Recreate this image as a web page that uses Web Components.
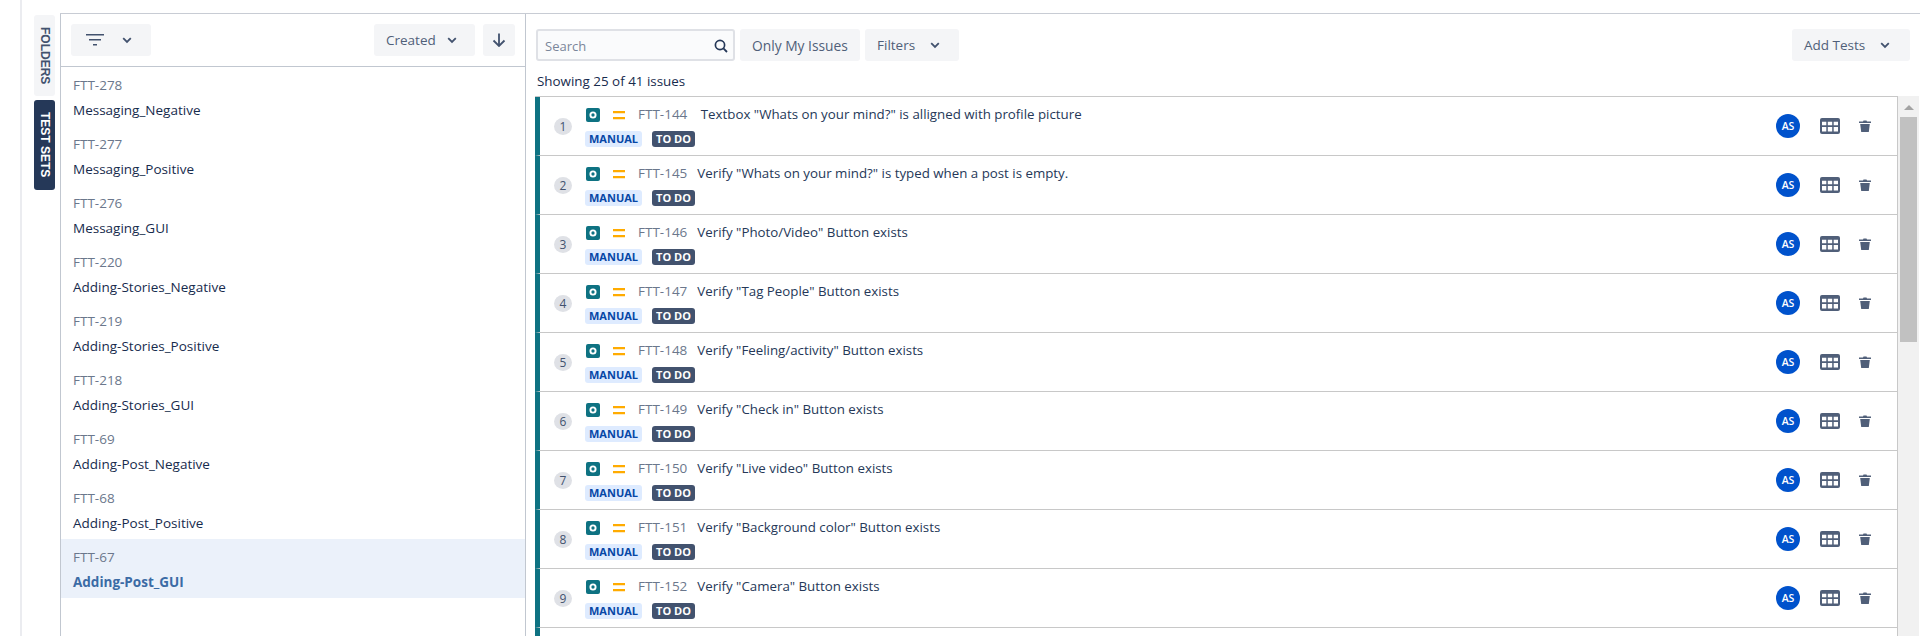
<!DOCTYPE html>
<html>
<head>
<meta charset="utf-8">
<title>Test Sets</title>
<style>
    html, body { margin: 0; height: 636px; overflow: hidden; background: #fff; }
    body { font-family: "Open Sans", "Noto Sans", sans-serif; color: #172b4d; }
</style>
</head>
<body>
<test-app></test-app>

<script>
const CHEVRON = `<svg width="10" height="10" viewBox="0 0 10 10"><path d="M1.2 3.2 5 7l3.8-3.8" fill="none" stroke="#42526e" stroke-width="1.8"/></svg>`;

class TestButton extends HTMLElement {
    constructor() {
        super();
        this.attachShadow({ mode: 'open' });
        this.shadowRoot.innerHTML = `
            <style>
                :host {
                    display: inline-flex;
                    align-items: center;
                    justify-content: flex-start;
                    gap: 15px;
                    height: 32px;
                    padding-left: 12px;
                    box-sizing: border-box;
                    background: #f4f5f7;
                    border-radius: 3px;
                    color: #505f79;
                    font-size: 13.5px;
                    flex: none;
                }
            </style>
            <slot></slot>
        `;
    }
}

class SideTabs extends HTMLElement {
    constructor() {
        super();
        this.attachShadow({ mode: 'open' });
        this.shadowRoot.innerHTML = `
            <style>
                :host {
                    display: flex;
                    flex-direction: column;
                    gap: 4px;
                    width: 21px;
                    padding-top: 1px;
                    flex: none;
                    font-family: "Liberation Sans", sans-serif;
                    font-size: 12px;
                    font-weight: bold;
                }
                div {
                    writing-mode: vertical-rl;
                    display: flex;
                    align-items: center;
                    justify-content: center;
                    border-radius: 3px;
                    box-sizing: border-box;
                }
                .off { height: 81px; background: #f4f5f7; color: #42526e; }
                .on { height: 90px; background: #253858; color: #fff; }
            </style>
            <div class="off">FOLDERS</div>
            <div class="on">TEST SETS</div>
        `;
    }
}

class SetItem extends HTMLElement {
    constructor() {
        super();
        this.attachShadow({ mode: 'open' });
        this.shadowRoot.innerHTML = `
            <style>
                :host {
                    display: block;
                    height: 59px;
                    box-sizing: border-box;
                    padding: 8px 12px 0;
                    font-size: 13.5px;
                }
                :host([selected]) { background: #ebf1fa; }
                .key { color: #6b778c; line-height: 20px; }
                .name { color: #172b4d; line-height: 20px; margin-top: 5px; }
                :host([selected]) .name { color: #3b6ba5; font-weight: 700; }
            </style>
            <div class="key">${this.getAttribute('key')}</div>
            <div class="name">${this.getAttribute('name')}</div>
        `;
    }
}

class SetPanel extends HTMLElement {
    constructor() {
        super();
        this.attachShadow({ mode: 'open' });
        this.shadowRoot.innerHTML = `
            <style>
                :host {
                    display: block;
                    width: 466px;
                    flex: none;
                    box-sizing: border-box;
                    border-left: 1px solid #c1c7d0;
                    border-right: 1px solid #c1c7d0;
                }
                .head {
                    display: flex;
                    align-items: center;
                    gap: 8px;
                    height: 52px;
                    padding: 0 10px;
                    border-bottom: 1px solid #c1c7d0;
                }
                .filter { width: 80px; margin-right: auto; padding-left: 15px; gap: 18px; }
                .created { width: 101px; gap: 11px; }
                .sort { width: 32px; padding-left: 9px; }
            </style>
            <div class="head">
                <test-button class="filter">
                    <svg width="18" height="14" viewBox="0 0 18 14"><path d="M0 1h18v1.5H0zM3 6h12v1.5H3zM7 11h4v1.5H7z" fill="#42526e"/></svg>
                    ${CHEVRON}
                </test-button>
                <test-button class="created">Created ${CHEVRON}</test-button>
                <test-button class="sort">
                    <svg width="14" height="14" viewBox="0 0 14 14"><path d="M7 .5V13M1.5 7.5 7 13l5.5-5.5" fill="none" stroke="#42526e" stroke-width="1.8"/></svg>
                </test-button>
            </div>
            <slot></slot>
        `;
    }
}

class IssueRow extends HTMLElement {
    constructor() {
        super();
        this.attachShadow({ mode: 'open' });
        this.shadowRoot.innerHTML = `
            <style>
                :host {
                    display: flex;
                    align-items: center;
                    height: 59px;
                    box-sizing: border-box;
                    border-bottom: 1px solid #c8c8c8;
                    border-left: 5px solid #0e7282;
                    font-size: 13.3px;
                }
                .num {
                    width: 18px;
                    height: 17px;
                    margin: 0 13px 0 14px;
                    border-radius: 50%;
                    background: #dfe1e6;
                    color: #42526e;
                    font-size: 12px;
                    line-height: 17px;
                    text-align: center;
                    flex: none;
                }
                .main { flex: 1; min-width: 0; }
                .line {
                    display: flex;
                    align-items: center;
                    height: 20px;
                    white-space: pre;
                }
                .type { margin-left: 1px; flex: none; }
                .prio { margin: 0 13px; flex: none; }
                .key { color: #6b778c; margin: -2px 10px 0 0; font-size: 13.5px; }
                .sum { color: #253858; margin-top: -2px; }
                .tags { display: flex; gap: 10px; margin-top: 6px; }
                .tag {
                    height: 16px;
                    padding: 0 4px;
                    border-radius: 3px;
                    font-size: 11px;
                    font-weight: 700;
                    line-height: 16px;
                }
                .manual { background: #deebff; color: #0747a6; }
                .todo { background: #42526e; color: #fff; }
                .avatar {
                    width: 24px;
                    height: 24px;
                    border-radius: 50%;
                    background: #0052cc;
                    color: #fff;
                    font-size: 10.5px;
                    font-weight: 600;
                    line-height: 24px;
                    text-align: center;
                    flex: none;
                }
                .grid { margin-left: 20px; flex: none; }
                .trash { margin: 0 26px 0 19px; flex: none; }
            </style>
            <div class="num">${this.getAttribute('num')}</div>
            <div class="main">
                <div class="line">
                    <svg class="type" width="14" height="14" viewBox="0 0 14 14"><rect width="14" height="14" rx="2" fill="#0e7282"/><circle cx="7" cy="7" r="2.6" fill="none" stroke="#fff" stroke-width="1.9"/></svg>
                    <svg class="prio" width="12" height="9" viewBox="0 0 12 9"><path d="M0 0h12v2.3H0zM0 6h12v2.3H0z" fill="#ffab00"/></svg>
                    <span class="key">${this.getAttribute('key')}</span>
                    <span class="sum"><slot></slot></span>
                </div>
                <div class="tags"><span class="tag manual">MANUAL</span><span class="tag todo">TO DO</span></div>
            </div>
            <div class="avatar">AS</div>
            <svg class="grid" width="20" height="16" viewBox="0 0 20 16"><rect width="20" height="16" rx="2" fill="#505f79"/><path d="M2 3.7h4.3v3.6H2zM7.8 3.7h4.4v3.6H7.8zM13.7 3.7H18v3.6h-4.3zM2 9h4.3v4.5H2zM7.8 9h4.4v4.5H7.8zM13.7 9H18v4.5h-4.3z" fill="#fff"/></svg>
            <svg class="trash" width="12" height="12" viewBox="0 0 12 12"><path d="M0 1.5h4L4.5.5h3l.5 1h4V3H0zM1.2 4h9.6l-1 8H2.2z" fill="#505f79"/></svg>
        `;
    }
}

class IssuePanel extends HTMLElement {
    constructor() {
        super();
        this.attachShadow({ mode: 'open' });
        this.shadowRoot.innerHTML = `
            <style>
                :host {
                    display: flex;
                    flex-direction: column;
                    flex: 1;
                    min-width: 0;
                    height: 100%;
                    overflow: hidden;
                }
                .tools {
                    display: flex;
                    gap: 5px;
                    padding: 15px 10px 0 10px;
                }
                .search {
                    display: flex;
                    align-items: center;
                    justify-content: space-between;
                    width: 199px;
                    height: 32px;
                    box-sizing: border-box;
                    padding: 1px 5px 0 7px;
                    background: #fafbfc;
                    border: 2px solid #dfe1e6;
                    border-radius: 3px;
                    color: #7a869a;
                    font-size: 13px;
                }
                .my { width: 120px; font-size: 13.8px; }
                .filters { width: 94px; }
                .add { width: 118px; margin-left: auto; }
                .count {
                    padding: 12px 0 0 11px;
                    height: 23px;
                    font-size: 13.4px;
                    color: #172b4d;
                    line-height: 17px;
                }
                .body { display: flex; flex: 1; padding: 0 1px 0 9px; min-height: 0; }
                .rows {
                    flex: 1;
                    min-width: 0;
                    overflow: hidden;
                    border-top: 1px solid #c8c8c8;
                    border-right: 1px solid #c8c8c8;
                }
                .rest { height: 40px; border-left: 5px solid #0e7282; }
                .bar {
                    position: relative;
                    width: 21px;
                    flex: none;
                    background: #f1f1f1;
                }
                .arrow {
                    position: absolute;
                    top: 9px;
                    left: 6px;
                    border: 5px solid transparent;
                    border-top: 0;
                    border-bottom: 5px solid #a3a3a3;
                }
                .thumb {
                    position: absolute;
                    top: 21px;
                    left: 2px;
                    width: 17px;
                    height: 225px;
                    background: #c1c1c1;
                }
            </style>
            <div class="tools">
                <div class="search">Search
                    <svg width="14" height="14" viewBox="0 0 14 14"><circle cx="6" cy="6" r="4.6" fill="none" stroke="#253858" stroke-width="1.7"/><path d="m9.4 9.4 3.6 3.6" stroke="#253858" stroke-width="1.8"/></svg>
                </div>
                <test-button class="my">Only My Issues</test-button>
                <test-button class="filters">Filters ${CHEVRON}</test-button>
                <test-button class="add">Add Tests ${CHEVRON}</test-button>
            </div>
            <div class="count">Showing 25 of 41 issues</div>
            <div class="body">
                <div class="rows"><slot></slot><div class="rest"></div></div>
                <div class="bar"><div class="arrow"></div><div class="thumb"></div></div>
            </div>
        `;
    }
}

class TestApp extends HTMLElement {
    constructor() {
        super();
        this.attachShadow({ mode: 'open' });
        const sets = [
            ['FTT-278', 'Messaging_Negative'], ['FTT-277', 'Messaging_Positive'], ['FTT-276', 'Messaging_GUI'],
            ['FTT-220', 'Adding-Stories_Negative'], ['FTT-219', 'Adding-Stories_Positive'], ['FTT-218', 'Adding-Stories_GUI'],
            ['FTT-69', 'Adding-Post_Negative'], ['FTT-68', 'Adding-Post_Positive'], ['FTT-67', 'Adding-Post_GUI']
        ];
        const issues = [
            ['FTT-144', ' Textbox "Whats on your mind?" is alligned with profile picture'],
            ['FTT-145', 'Verify "Whats on your mind?" is typed when a post is empty.'],
            ['FTT-146', 'Verify "Photo/Video" Button exists'],
            ['FTT-147', 'Verify "Tag People" Button exists'],
            ['FTT-148', 'Verify "Feeling/activity" Button exists'],
            ['FTT-149', 'Verify "Check in" Button exists'],
            ['FTT-150', 'Verify "Live video" Button exists'],
            ['FTT-151', 'Verify "Background color" Button exists'],
            ['FTT-152', 'Verify "Camera" Button exists']
        ];
        this.shadowRoot.innerHTML = `
            <style>
                :host {
                    display: block;
                    height: 636px;
                    overflow: hidden;
                    box-sizing: border-box;
                    margin-left: 20px;
                    border-left: 2px solid #ebecf0;
                }
                .top { height: 13px; margin-left: 38px; border-bottom: 1px solid #c8ccd4; }
                .main { display: flex; height: 622px; padding-left: 12px; }
            </style>
            <div class="top"></div>
            <div class="main">
                <side-tabs></side-tabs>
                <set-panel style="margin-left: 5px">
                    ${sets.map((s, i) => `<set-item key="${s[0]}" name="${s[1]}" ${i === 8 ? 'selected' : ''}></set-item>`).join('')}
                </set-panel>
                <issue-panel>
                    ${issues.map((s, i) => `<issue-row num="${i + 1}" key="${s[0]}">${s[1].replace(/"/g, '&quot;')}</issue-row>`).join('')}
                </issue-panel>
            </div>
        `;
    }
}

customElements.define('test-button', TestButton);
customElements.define('side-tabs', SideTabs);
customElements.define('set-item', SetItem);
customElements.define('set-panel', SetPanel);
customElements.define('issue-row', IssueRow);
customElements.define('issue-panel', IssuePanel);
customElements.define('test-app', TestApp);
</script>
</body>
</html>
